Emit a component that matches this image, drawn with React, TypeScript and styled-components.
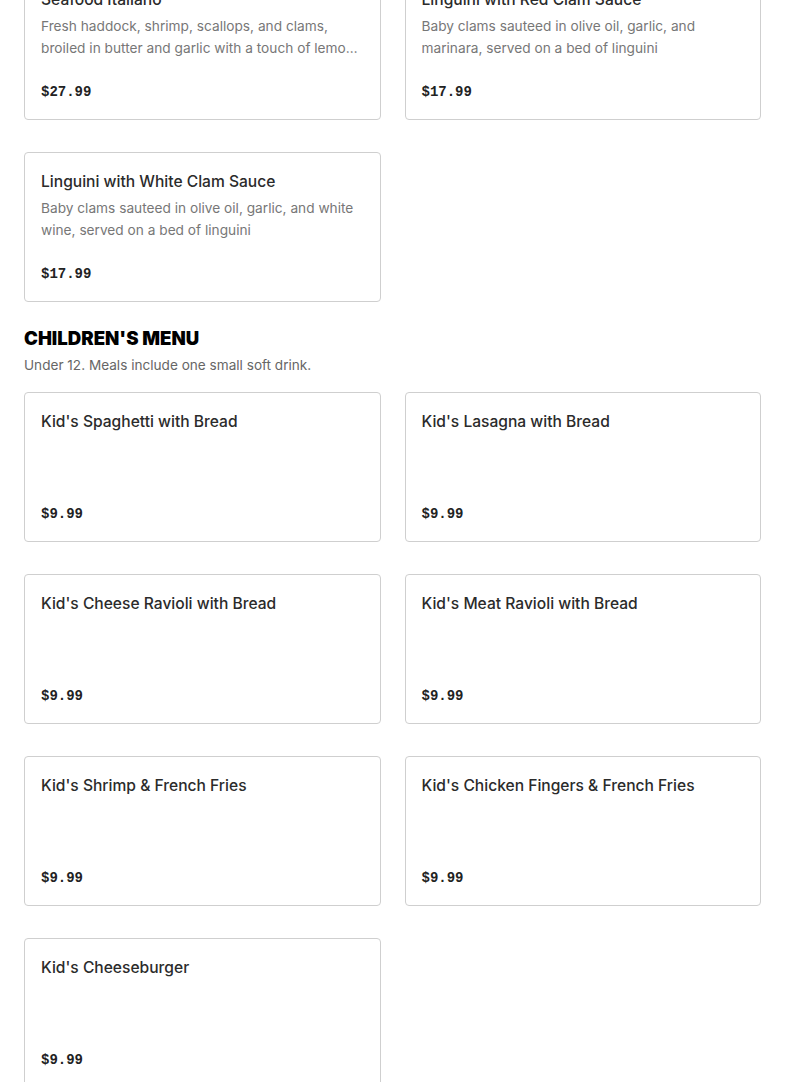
import React from 'react';
import styled, { createGlobalStyle } from 'styled-components';

interface MenuItem {
  name: string;
  description?: string;
  price: string;
}

interface MenuSection {
  title?: string;
  note?: string;
  items: MenuItem[];
}

const GlobalStyle = createGlobalStyle`
  body {
    margin: 0;
    background: #fff;
    font-family: Inter, "Noto Sans", sans-serif;
  }
`;

const Page = styled.div`
  padding: 0 24px;
  margin-top: -30px;
`;

const Section = styled.section`
  margin-bottom: 23px;
`;

const SectionTitle = styled.h2`
  margin: 0;
  color: #000;
  font-family: Inter, sans-serif;
  font-size: 18.6px;
  font-weight: 900;
  line-height: 26px;
  text-transform: uppercase;
`;

const SectionNote = styled.p`
  margin: 3px 0 16px;
  color: #666;
  font-size: 13.6px;
  line-height: 22px;
`;

const Grid = styled.div`
  display: grid;
  grid-template-columns: 1fr 1fr;
  column-gap: 24px;
  row-gap: 32px;
`;

const Card = styled.div`
  height: 150px;
  box-sizing: border-box;
  padding: 16px 16px 15px;
  border: 1px solid #cfcfcf;
  border-radius: 4px;
  display: flex;
  flex-direction: column;
`;

const ItemName = styled.h3`
  margin: 0 0 2px;
  color: #2b2b2b;
  font-size: 15.6px;
  font-weight: 500;
  line-height: 26px;
`;

const ItemDesc = styled.p`
  margin: 0;
  color: #777;
  font-size: 13.7px;
  line-height: 22px;
  display: -webkit-box;
  -webkit-line-clamp: 2;
  -webkit-box-orient: vertical;
  overflow: hidden;
`;

const Price = styled.span`
  margin-top: auto;
  color: #222;
  font-family: "Liberation Mono", monospace;
  font-size: 14px;
  font-weight: 700;
  line-height: 24px;
`;

const sections: MenuSection[] = [
  {
    items: [
      {
        name: 'Seafood Italiano',
        description:
          'Fresh haddock, shrimp, scallops, and clams, broiled in butter and garlic with a touch of lemon and white wine',
        price: '$27.99',
      },
      {
        name: 'Linguini with Red Clam Sauce',
        description: 'Baby clams sauteed in olive oil, garlic, and marinara, served on a bed of linguini',
        price: '$17.99',
      },
      {
        name: 'Linguini with White Clam Sauce',
        description: 'Baby clams sauteed in olive oil, garlic, and white wine, served on a bed of linguini',
        price: '$17.99',
      },
    ],
  },
  {
    title: "Children's Menu",
    note: 'Under 12. Meals include one small soft drink.',
    items: [
      { name: "Kid's Spaghetti with Bread", price: '$9.99' },
      { name: "Kid's Lasagna with Bread", price: '$9.99' },
      { name: "Kid's Cheese Ravioli with Bread", price: '$9.99' },
      { name: "Kid's Meat Ravioli with Bread", price: '$9.99' },
      { name: "Kid's Shrimp & French Fries", price: '$9.99' },
      { name: "Kid's Chicken Fingers & French Fries", price: '$9.99' },
      { name: "Kid's Cheeseburger", price: '$9.99' },
    ],
  },
];

const App: React.FC = () => {
  return (
    <Page>
      <GlobalStyle />
      {sections.map((section, i) => (
        <Section key={i}>
          {section.title && <SectionTitle>{section.title}</SectionTitle>}
          {section.note && <SectionNote>{section.note}</SectionNote>}
          <Grid>
            {section.items.map((item) => (
              <Card key={item.name}>
                <ItemName>{item.name}</ItemName>
                {item.description && <ItemDesc>{item.description}</ItemDesc>}
                <Price>{item.price}</Price>
              </Card>
            ))}
          </Grid>
        </Section>
      ))}
    </Page>
  );
};

export default App;
